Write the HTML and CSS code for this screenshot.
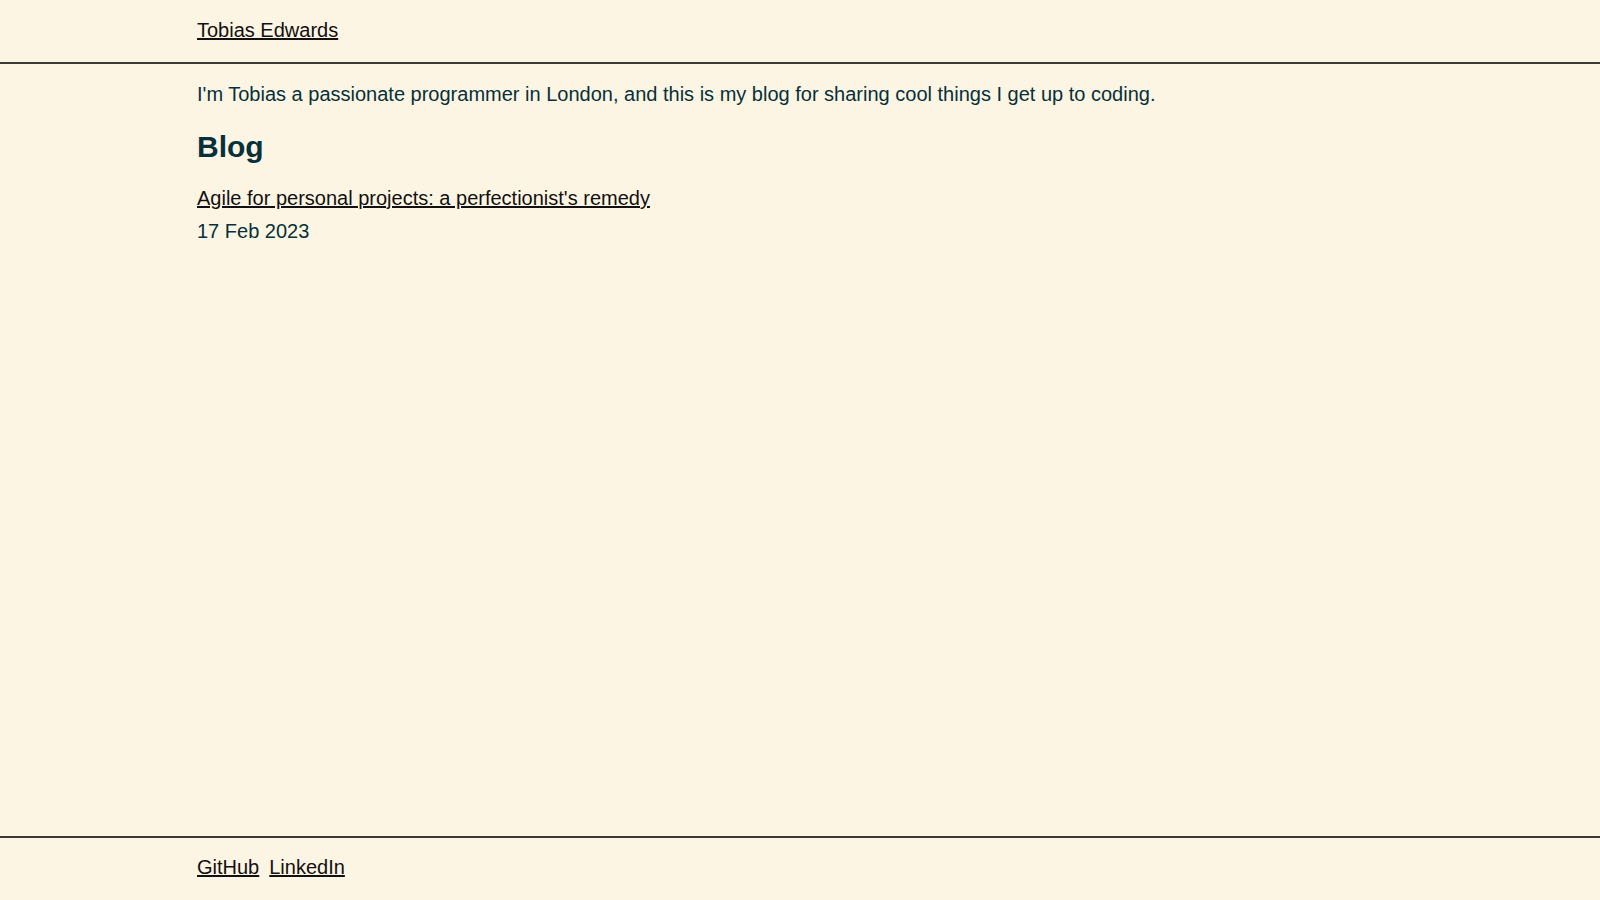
FILE: index.html
```html
<!DOCTYPE html>
<html lang="en">
<head>
<meta charset="utf-8">
<title>Tobias Edwards</title>
<link rel="stylesheet" href="styles.css">
</head>
<body>
  <header class="site-header">
    <div class="container">
      <a class="link" href="#">Tobias Edwards</a>
    </div>
  </header>
  <main class="site-main">
    <div class="container">
      <p class="intro">I'm Tobias a passionate programmer in London, and this is my blog for sharing cool things I get up to coding.</p>
      <h1 class="heading">Blog</h1>
      <ul class="posts">
        <li class="post">
          <a class="link" href="#">Agile for personal projects: a perfectionist's remedy</a>
          <div class="post-date">17 Feb 2023</div>
        </li>
      </ul>
    </div>
  </main>
  <footer class="site-footer">
    <div class="container footer-links">
      <a class="link" href="#">GitHub</a>
      <a class="link" href="#">LinkedIn</a>
    </div>
  </footer>
</body>
</html>
```

FILE: styles.css
```css
html, body {
  margin: 0;
  padding: 0;
}

body {
  background: #fdf5e3;
  color: #06303a;
  font-family: "Liberation Sans", Arial, sans-serif;
  font-size: 20px;
  line-height: 30px;
  min-height: 100vh;
  display: flex;
  flex-direction: column;
}

.container {
  max-width: 1206px;
  margin: 0 auto;
  width: 100%;
}

.link {
  color: #111;
  text-decoration: underline;
}

.site-header {
  padding: 15px 0 17px;
  border-bottom: 2px solid #3a3a36;
}

.site-main {
  flex: 1;
  padding-top: 15px;
}

.intro {
  margin: 0 0 15px;
}

.heading {
  margin: 0 0 14px;
  font-size: 30px;
  line-height: 45px;
  font-weight: bold;
}

.posts {
  list-style: none;
  margin: 0;
  padding: 0;
}

.post-date {
  margin-top: 3px;
}

.site-footer {
  border-top: 2px solid #3a3a36;
  padding: 14px 0 18px;
}

.footer-links {
  display: flex;
  gap: 10px;
}
```
